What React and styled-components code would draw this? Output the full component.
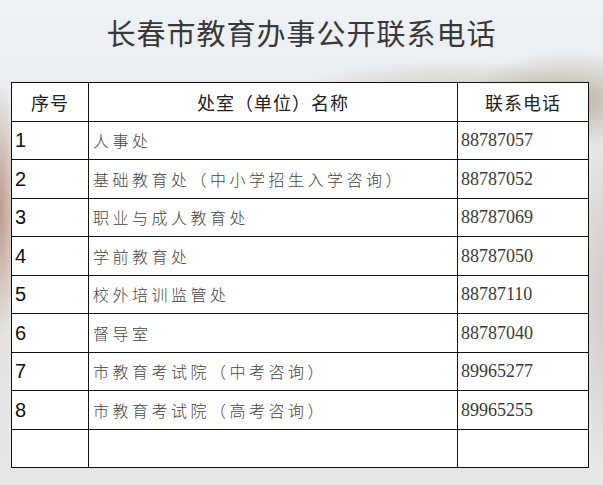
import React from 'react';
import styled, {createGlobalStyle} from 'styled-components';

const GlobalStyle = createGlobalStyle`
  html, body {
    margin: 0;
    padding: 0;
  }
  body {
    width: 603px;
    height: 485px;
    overflow: hidden;
  }
`;

const Page = styled.div`
  width: 603px;
  height: 485px;
  box-sizing: border-box;
  padding: 0 15px 0 11px;
  background:
    radial-gradient(ellipse 150px 70px at 570px 100px, rgba(140, 125, 90, 0.5), rgba(140, 125, 90, 0) 70%),
    radial-gradient(ellipse 220px 45px at 450px 92px, rgba(160, 150, 115, 0.35), rgba(160, 150, 115, 0) 70%),
    radial-gradient(ellipse 28px 170px at 0px 210px, rgba(160, 105, 85, 0.6), rgba(160, 105, 85, 0) 75%),
    radial-gradient(ellipse 40px 220px at 603px 300px, rgba(185, 180, 175, 0.5), rgba(185, 180, 175, 0) 75%),
    linear-gradient(180deg, #eef2f6 0%, #eaedf0 18%, #e6e3df 45%, #e6e4e2 75%, #e7e7e7 100%);
  font-family: "Noto Sans CJK SC", sans-serif;
`;

const Title = styled.h1`
  margin: 0;
  height: 82px;
  box-sizing: border-box;
  padding-top: 14px;
  padding-left: 4px;
  text-align: center;
  font-family: "Noto Sans CJK SC", serif;
  font-size: 29px;
  line-height: 36px;
  font-weight: 400;
  letter-spacing: 1px;
  color: #383838;
`;

const Table = styled.table`
  width: 577px;
  border-collapse: collapse;
  background: #fff;
  table-layout: fixed;
`;

const Row = styled.tr`
  height: 38.5px;
`;

const HeadCell = styled.th`
  border: 1.3px solid #111;
  padding: 0;
  font-family: "Noto Sans CJK SC", sans-serif;
  font-size: 18px;
  font-weight: 400;
  color: #222;
  text-align: center;
  letter-spacing: 1px;
  line-height: 20px;
`;

const Cell = styled.td`
  border: 1.3px solid #111;
  padding: 0 0 0 ${p => p.$pad || 3}px;
  vertical-align: middle;
  color: ${p => p.$color || '#333'};
  font-family: ${p => p.$font || '"Noto Sans CJK SC", sans-serif'};
  font-size: ${p => p.$size || 17}px;
  font-weight: ${p => p.$weight || 400};
  letter-spacing: ${p => p.$spacing || 0}px;
  line-height: 20px;
  white-space: nowrap;
`;

const rows = [
    ['1', '人事处', '88787057'],
    ['2', '基础教育处（中小学招生入学咨询）', '88787052'],
    ['3', '职业与成人教育处', '88787069'],
    ['4', '学前教育处', '88787050'],
    ['5', '校外培训监管处', '88787110'],
    ['6', '督导室', '88787040'],
    ['7', '市教育考试院（中考咨询）', '89965277'],
    ['8', '市教育考试院（高考咨询）', '89965255'],
    ['', '', ''],
];

export default function App() {
    return (
        <Page>
            <GlobalStyle/>
            <Title>长春市教育办事公开联系电话</Title>
            <Table>
                <colgroup>
                    <col style={{width: 77}}/>
                    <col style={{width: 369}}/>
                    <col style={{width: 131}}/>
                </colgroup>
                <thead>
                <Row>
                    <HeadCell>序号</HeadCell>
                    <HeadCell>处室（单位）名称</HeadCell>
                    <HeadCell>联系电话</HeadCell>
                </Row>
                </thead>
                <tbody>
                {rows.map((r, i) => (
                    <Row key={i}>
                        <Cell $font='"Liberation Sans", Arial, sans-serif' $size={20} $color="#111" $pad={3}>
                            {r[0]}
                        </Cell>
                        <Cell $size={16} $weight={300} $spacing={3.5} $color="#444" $pad={4}>
                            {r[1]}
                        </Cell>
                        <Cell $font='"Liberation Serif", "Times New Roman", serif' $size={18} $color="#3a3a3a" $pad={3}>
                            {r[2]}
                        </Cell>
                    </Row>
                ))}
                </tbody>
            </Table>
        </Page>
    );
}
